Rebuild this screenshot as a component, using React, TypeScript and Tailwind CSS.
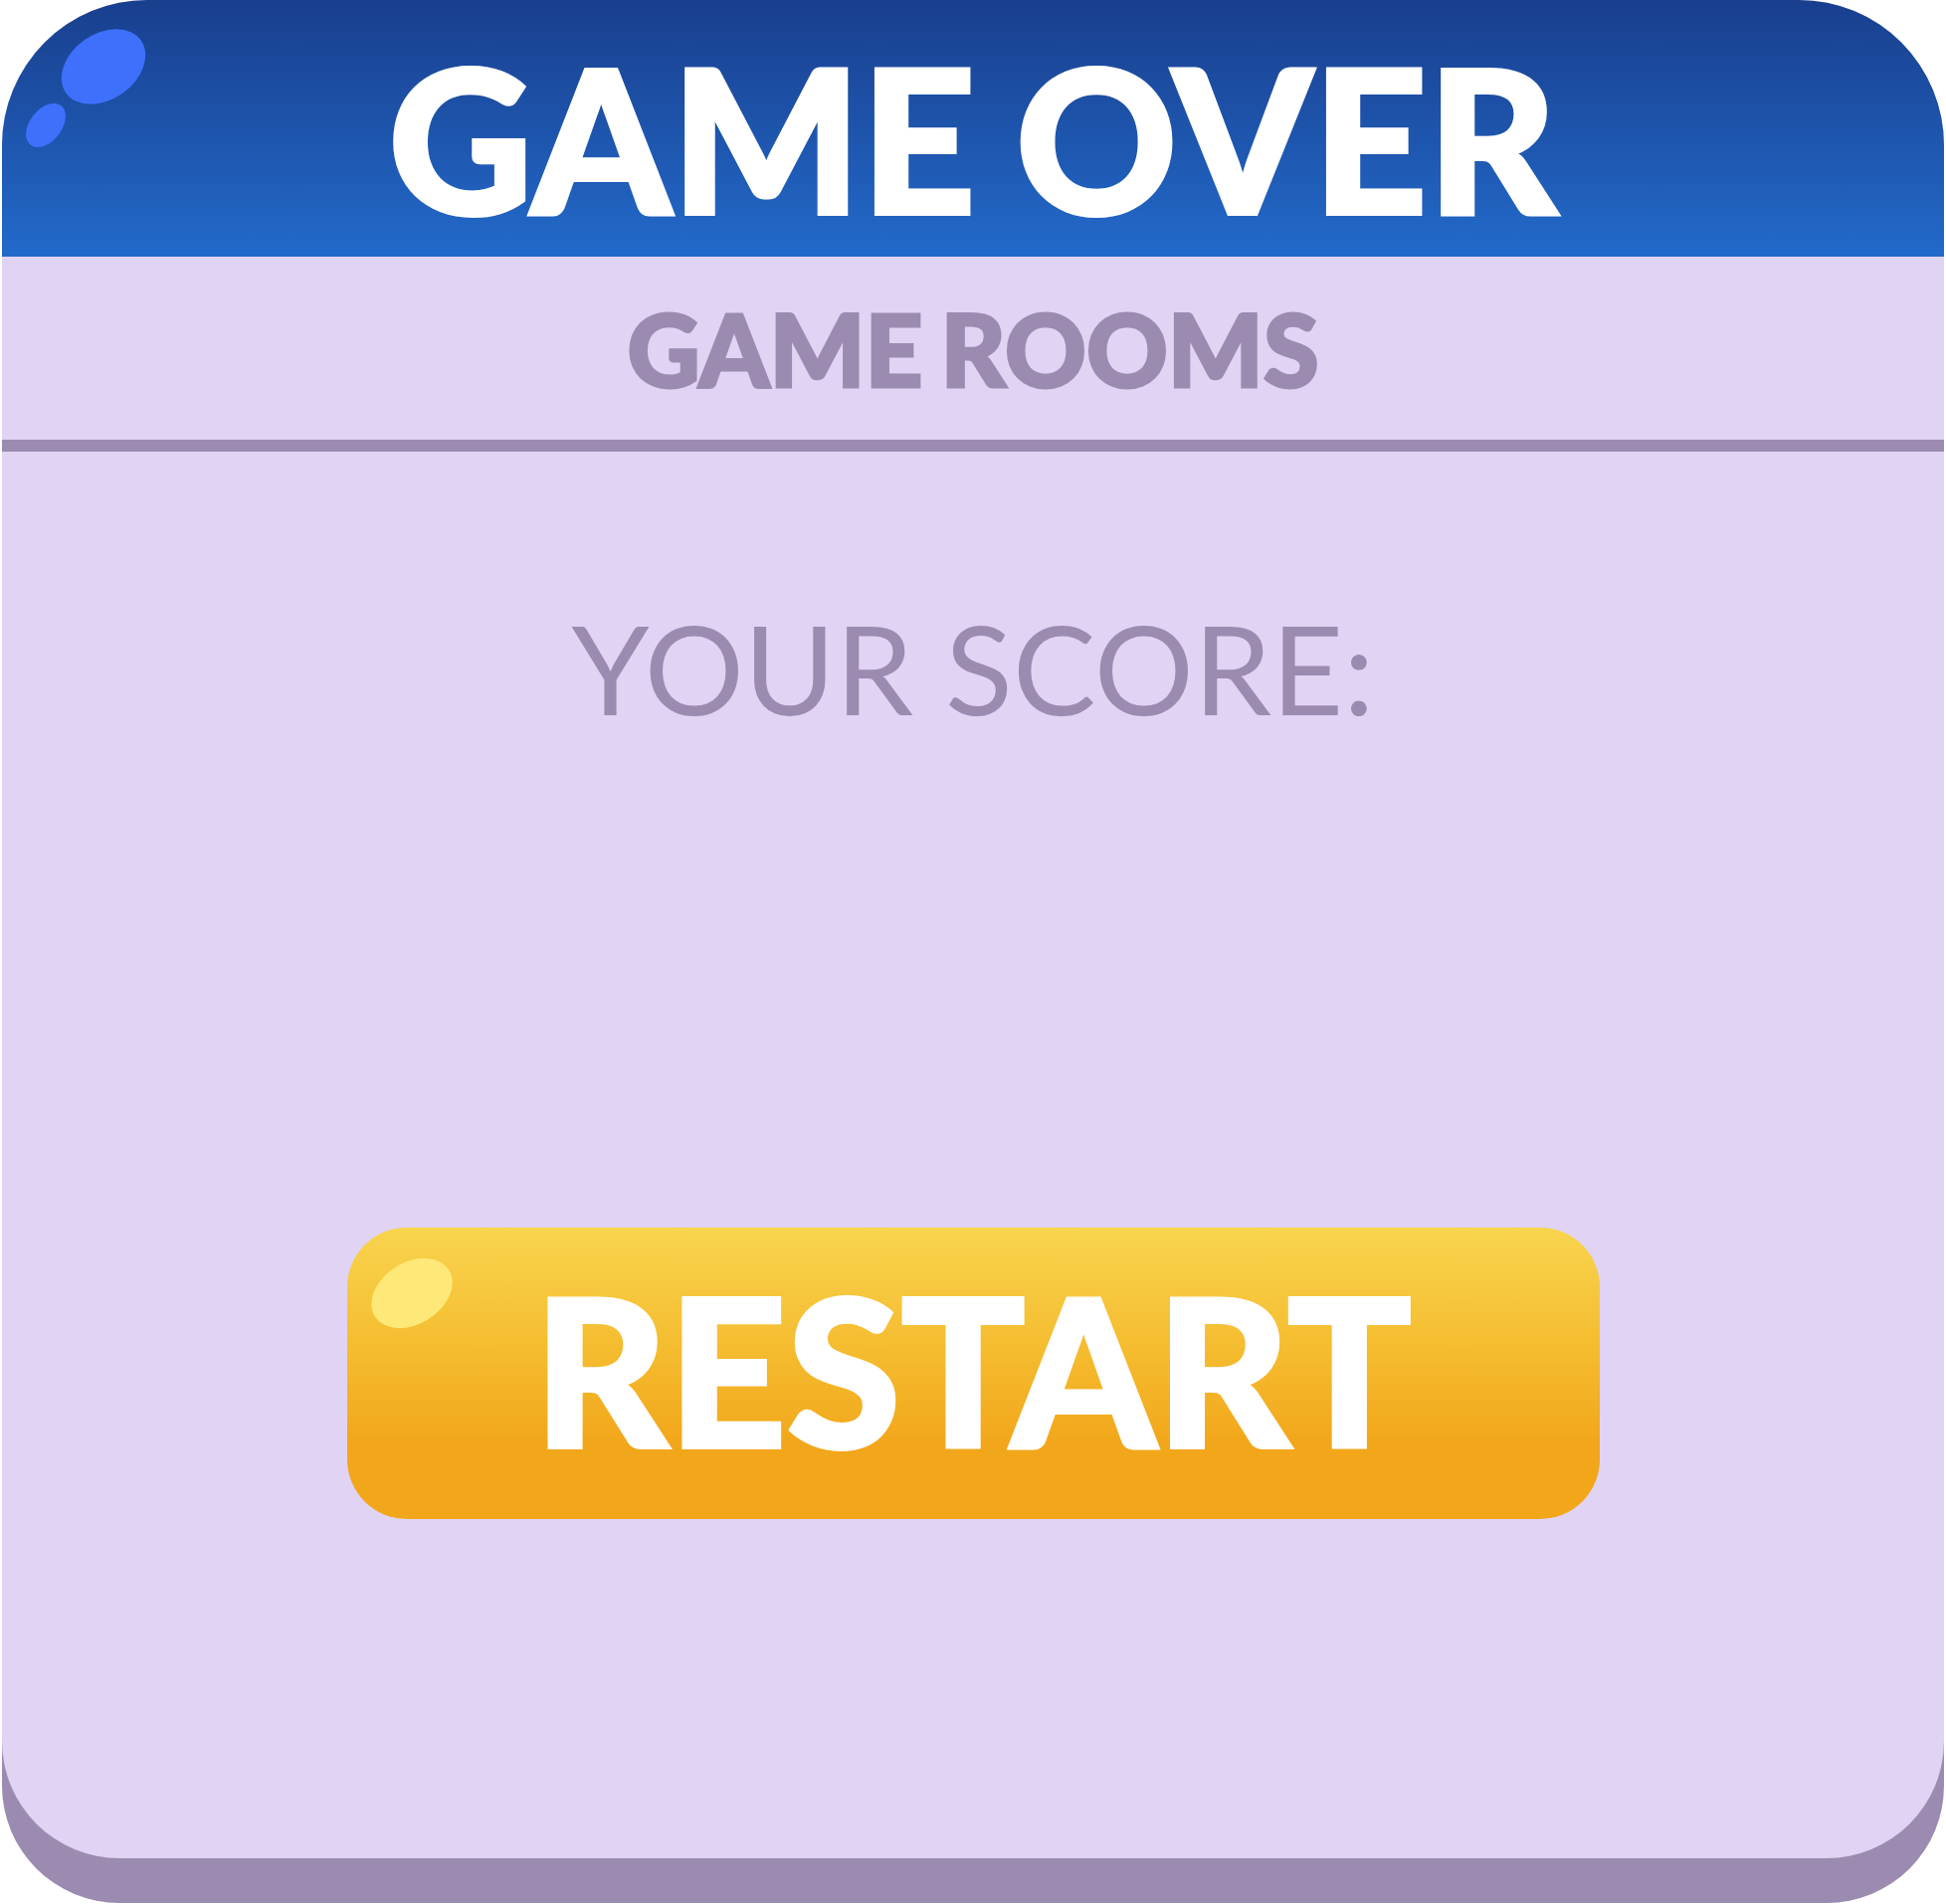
import React from "react";

export default function App() {
  const lato = { fontFamily: '"Lato", "Open Sans", sans-serif' } as React.CSSProperties;
  return (
    <div className="w-[1956px] h-[1914px] bg-white" style={lato}>
      <div className="ml-[2px] w-[1952px] h-[1868px] flex flex-col rounded-t-[146px] rounded-b-[118px] bg-[#e1d3f3] shadow-[0_45px_0_0_#9b8bb0]">
        <div className="relative h-[258px] rounded-t-[146px] bg-gradient-to-b from-[#193f8e] to-[#226aca] flex justify-center pt-[38px]">
          <svg className="absolute left-[20px] top-[24px]" width="130" height="130" viewBox="0 0 130 130">
            <ellipse cx="82" cy="43" rx="46" ry="33" transform="rotate(-35 82 43)" fill="#3e70fc" />
            <ellipse cx="24" cy="102" rx="16" ry="25" transform="rotate(38 24 102)" fill="#3e70fc" />
          </svg>
          <div className="text-white text-[200px] font-black leading-none tracking-[0.5px] [word-spacing:-8px] [-webkit-text-stroke:4px_#ffffff]">GAME OVER</div>
        </div>
        <div className="h-[184px] flex items-center justify-center">
          <div className="text-[#9b8bb0] text-[101px] font-black leading-none tracking-[0px] [word-spacing:-6px] [-webkit-text-stroke:3px_#9b8bb0]">GAME ROOMS</div>
        </div>
        <div className="h-[12px] bg-[#9b8bb0]" />
        <div className="flex flex-col items-center pt-[155px]">
          <div className="text-[#9b8bb0] text-[125px] font-normal leading-none">YOUR SCORE:</div>
          <div className="mt-[500px] relative w-[1259px] h-[293px] rounded-[60px] bg-gradient-to-b from-[#f8d44d] via-[#f5bd30] via-40% to-[#f2a619] to-75% flex items-center justify-center pb-[10px]">
            <svg className="absolute left-[18px] top-[24px]" width="94" height="84" viewBox="0 0 94 84">
              <ellipse cx="47" cy="42" rx="44" ry="31" transform="rotate(-32 47 42)" fill="#fde878" />
            </svg>
            <div className="text-white text-[207px] font-black leading-none tracking-[0.5px] [-webkit-text-stroke:4px_#ffffff]">RESTART</div>
          </div>
        </div>
      </div>
    </div>
  );
}
